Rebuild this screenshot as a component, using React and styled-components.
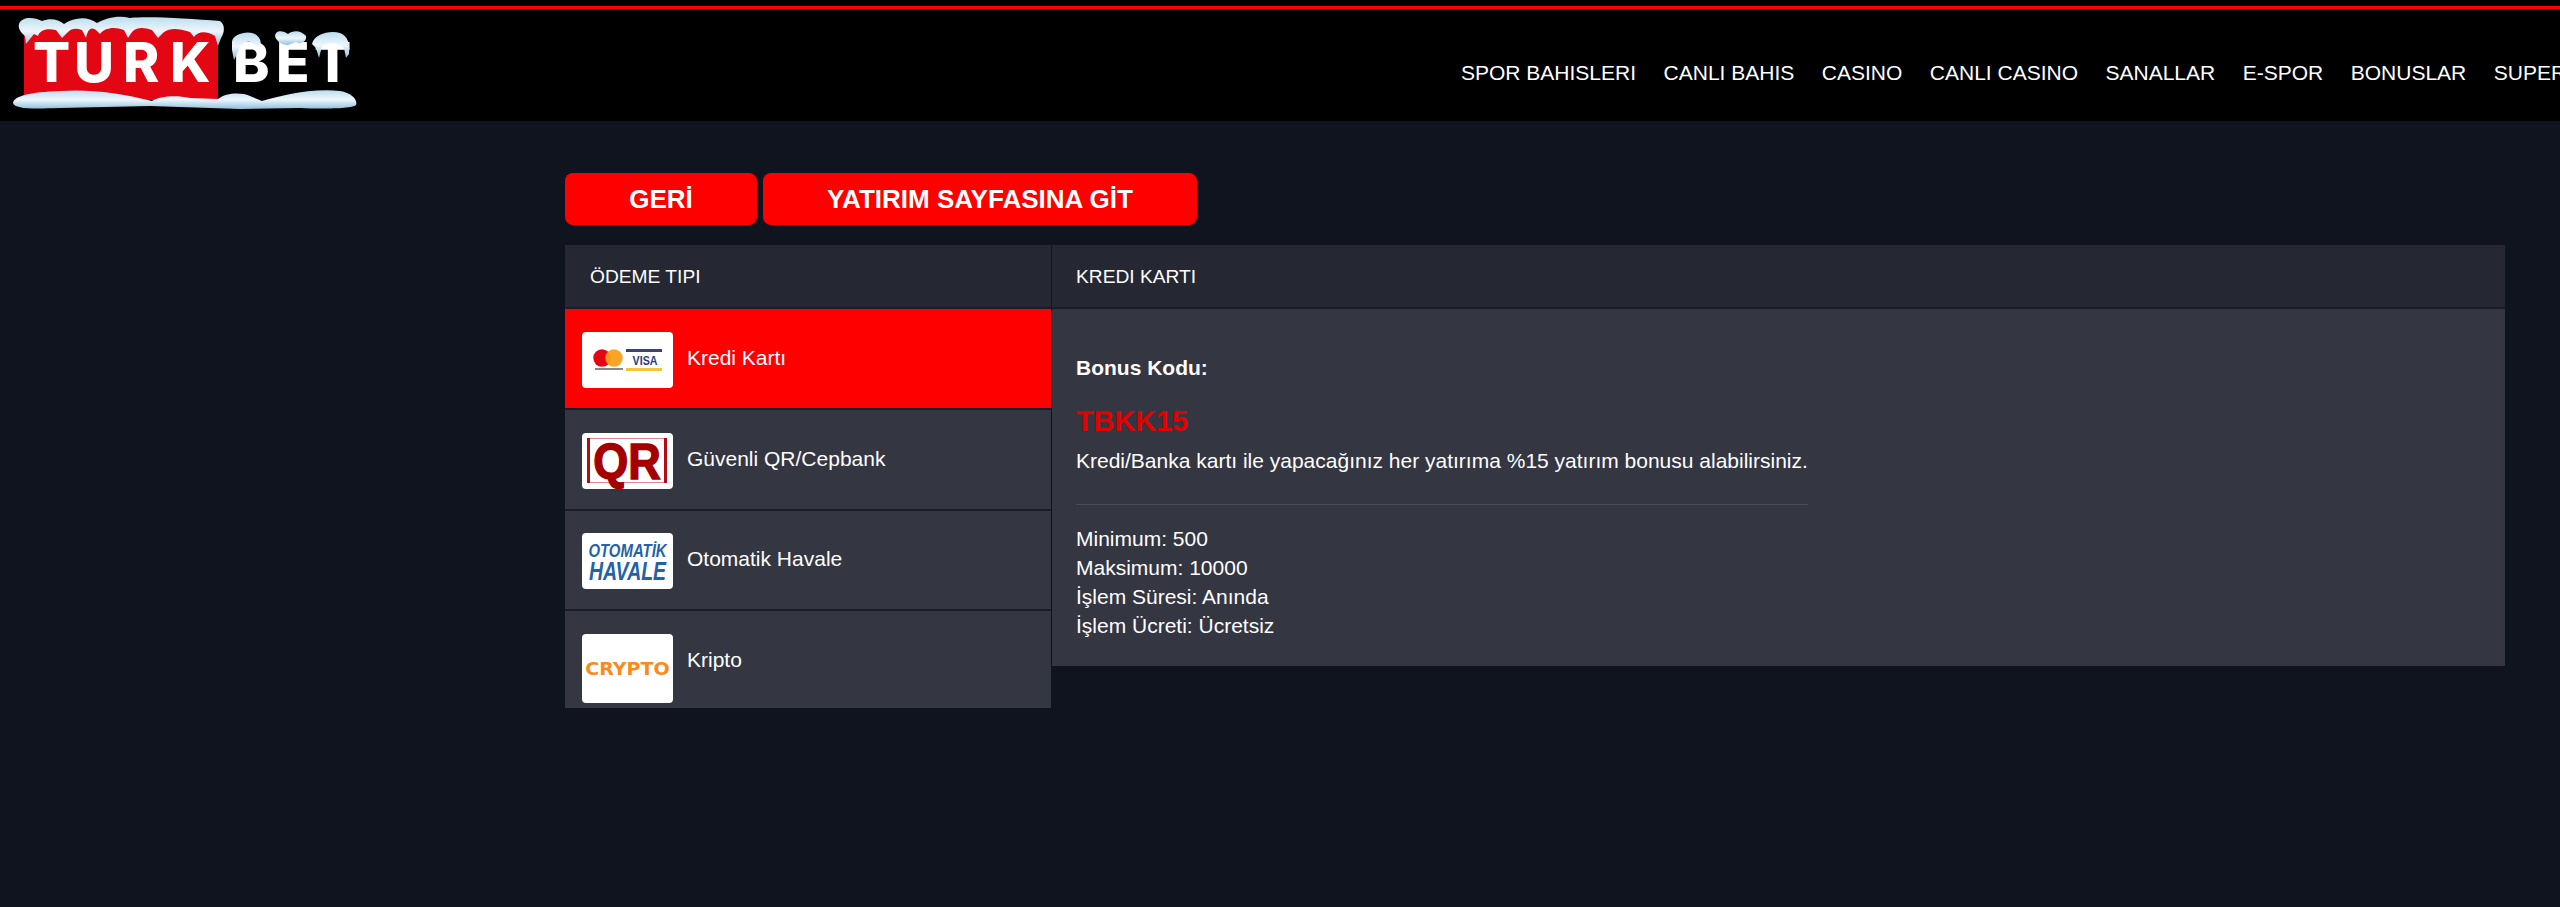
import React from "react";
import styled, { createGlobalStyle } from "styled-components";

const GlobalStyle = createGlobalStyle`
  html, body {
    margin: 0;
    height: 100%;
    background: #10141f;
    overflow: hidden;
  }
  body {
    font-family: "Liberation Sans", Arial, sans-serif;
    color: #fff;
  }
`;

const navItems = ["SPOR BAHISLERI", "CANLI BAHIS", "CASINO", "CANLI CASINO", "SANALLAR", "E-SPOR", "BONUSLAR", "SUPER TOTO"];

const details = ["Minimum: 500", "Maksimum: 10000", "İşlem Süresi: Anında", "İşlem Ücreti: Ücretsiz"];

const Snow = ({ d }) => <path d={d} fill="url(#snow)" />;

// drawn in page coordinates, the svg sits at the top left of the header
const Logo = () => (
  <LogoSvg viewBox="0 0 360 112" width="360" height="112">
    <defs>
      <linearGradient id="snow" x1="0" y1="0" x2="0" y2="1">
        <stop offset="0" stopColor="#bcdcee" />
        <stop offset="0.5" stopColor="#eef7fc" />
        <stop offset="1" stopColor="#8dbfdc" />
      </linearGradient>
    </defs>
    <rect x="24" y="28" width="194" height="72" fill="#e30613" />
    <g fontFamily="Inter, 'Liberation Sans', sans-serif" fontWeight="800" fontSize="55" fill="#fff">
      <text x="33 74 123 170" y="82">TURK</text>
      <text x="233 276 314" y="82">BET</text>
    </g>
    <Snow d="M19 24 C22 16 34 17 42 21 C50 18 58 19 64 24 C74 17 88 16 97 23 C106 18 118 15 130 18 C150 16 190 19 220 21 C226 25 224 34 221 38 L218 46 L215 36 C205 30 198 32 194 37 L190 32 C178 28 170 28 164 32 L158 38 L152 30 C144 27 136 27 132 32 L128 38 L124 30 C114 26 104 28 100 34 L96 30 C90 26 88 30 86 38 L82 30 C76 28 72 28 68 32 L62 38 L56 30 C46 28 40 30 38 36 L34 34 L26 44 L25 36 C20 32 18 28 19 24 Z" />
    <Snow d="M232 42 C232 35 245 31 252 33 C260 35 262 42 260 47 L250 42 C244 41 240 45 238 52 L234 60 L232 50 Z" />
    <Snow d="M275 36 C276 29 284 31 288 34 C293 30 301 30 306 36 C307 42 300 45 296 42 L288 45 C282 45 276 41 275 36 Z" />
    <Snow d="M312 44 C314 34 330 30 340 33 C348 36 350 44 349 54 L346 58 L344 48 C338 42 328 42 322 46 L319 58 L316 48 Z" />
    <Snow d="M13 103 C14 96 30 92 60 91 C90 89 120 93 152 101 C160 96 176 95 190 98 L218 99 C226 93 240 92 250 96 L262 101 C280 96 310 88 340 91 C352 93 358 100 356 105 C352 109 320 109 300 108 L240 109 L150 106 L60 108 C30 109 15 109 13 103 Z" />
  </LogoSvg>
);

const CardIcon = () => (
  <svg viewBox="0 0 91 56" width="91" height="56">
    <circle cx="20" cy="26" r="8.7" fill="#e30613" />
    <circle cx="32" cy="26" r="8.7" fill="#f9a01b" opacity="0.95" />
    <rect x="13" y="36" width="28" height="2" fill="#888" />
    <rect x="44" y="17" width="36" height="3" fill="#3c4281" />
    <text transform="translate(63 33) scale(0.82 1)" textAnchor="middle" fontFamily="Liberation Sans" fontWeight="700" fontSize="13" fill="#2b3a78">VISA</text>
    <rect x="44" y="36" width="36" height="3" fill="#f5c33c" />
  </svg>
);

const QrIcon = () => (
  <svg viewBox="0 0 91 56" width="91" height="56">
    <rect x="5" y="5" width="3" height="45" fill="#b10d12" />
    <rect x="82" y="5" width="3" height="45" fill="#b10d12" />
    <rect x="8" y="5" width="74" height="1" fill="#d88" />
    <rect x="8" y="49" width="74" height="1" fill="#d88" />
    <text transform="translate(45 46) scale(0.9 1)" textAnchor="middle" fontFamily="Liberation Sans" fontWeight="700" fontSize="50" fill="#a50000" stroke="#a50000" strokeWidth="1.5">QR</text>
  </svg>
);

const HavaleIcon = () => (
  <svg viewBox="0 0 91 56" width="91" height="56">
    <g fontFamily="Liberation Sans" fontWeight="700" fontStyle="italic" fill="#2462a8" textAnchor="middle">
      <text transform="translate(45.5 24) scale(0.83 1)" fontSize="18">OTOMATİK</text>
      <text transform="translate(45.5 47) scale(0.78 1)" fontSize="25">HAVALE</text>
    </g>
  </svg>
);

const CryptoIcon = () => (
  <svg viewBox="0 0 91 69" width="91" height="69">
    <text transform="translate(45.5 41) scale(1.06 1)" textAnchor="middle" fontFamily="DejaVu Sans" fontWeight="700" fontSize="18" fill="#fb8a1e">CRYPTO</text>
  </svg>
);

const methods = [
  { name: "Kredi Kartı", icon: <CardIcon />, active: true, height: 101 },
  { name: "Güvenli QR/Cepbank", icon: <QrIcon />, height: 100.5 },
  { name: "Otomatik Havale", icon: <HavaleIcon />, height: 100.5 },
  { name: "Kripto", icon: <CryptoIcon />, tall: true, height: 97 },
];

export default function App() {
  return (
    <>
      <GlobalStyle />
      <Header>
        <Logo />
        <Nav>
          {navItems.map((item) => (
            <NavLink key={item}>{item}</NavLink>
          ))}
        </Nav>
      </Header>
      <Main>
        <Buttons>
          <ActionButton $width={192}>GERİ</ActionButton>
          <ActionButton $width={434}>YATIRIM SAYFASINA GİT</ActionButton>
        </Buttons>
        <Columns>
          <LeftColumn>
            <ColumnTitle $pad={25}>ÖDEME TIPI</ColumnTitle>
            {methods.map((m) => (
              <MethodRow key={m.name} $active={m.active} $tall={m.tall} $height={m.height}>
                <IconBox $tall={m.tall}>{m.icon}</IconBox>
                <MethodName>{m.name}</MethodName>
              </MethodRow>
            ))}
          </LeftColumn>
          <RightColumn>
            <ColumnTitle $pad={24}>KREDI KARTI</ColumnTitle>
            <Details>
              <BonusBlock>
                <BonusLabel>Bonus Kodu:</BonusLabel>
                <BonusCode>TBKK15</BonusCode>
                <BonusText>Kredi/Banka kartı ile yapacağınız her yatırıma %15 yatırım bonusu alabilirsiniz.</BonusText>
                <Divider />
                {details.map((line) => (
                  <DetailLine key={line}>{line}</DetailLine>
                ))}
              </BonusBlock>
            </Details>
          </RightColumn>
        </Columns>
      </Main>
    </>
  );
}

const Header = styled.header`
  box-sizing: border-box;
  height: 121px;
  background: #000;
  display: flex;
  overflow: hidden;
  position: relative;

  &::before {
    content: "";
    position: absolute;
    top: 6px;
    left: 0;
    right: 0;
    height: 3px;
    background: #f00;
  }
`;

const LogoSvg = styled.svg`
  flex-shrink: 0;
`;

const Nav = styled.nav`
  display: flex;
  flex-shrink: 0;
  gap: 27.5px;
  margin-left: 1101px;
  padding-top: 61px;
`;

const NavLink = styled.a`
  font-size: 21px;
  line-height: 24px;
  white-space: nowrap;
  color: #fff;
`;

const Main = styled.main`
  box-sizing: border-box;
  width: 2505px;
  padding: 52px 0 0 565px;
`;

const Buttons = styled.div`
  display: flex;
  gap: 6px;
  margin-bottom: 20px;
`;

const ActionButton = styled.a`
  width: ${(p) => p.$width}px;
  height: 52px;
  border-radius: 8px;
  background: #f00;
  color: #fff;
  font-size: 26px;
  font-weight: 700;
  display: flex;
  align-items: center;
  justify-content: center;
`;

const Columns = styled.div`
  display: flex;
  align-items: flex-start;
  gap: 1px;
`;

const LeftColumn = styled.div`
  width: 486px;
  flex-shrink: 0;
`;

const RightColumn = styled.div`
  flex: 1;
`;

const ColumnTitle = styled.div`
  box-sizing: border-box;
  height: 64px;
  padding: 1px ${(p) => p.$pad}px 0;
  background: #252833;
  border-bottom: 2px solid #1a1d28;
  font-size: 19.2px;
  display: flex;
  align-items: center;
`;

const MethodRow = styled.div`
  box-sizing: border-box;
  height: ${(p) => p.$height}px;
  padding: 22.5px 0 0 17px;
  display: flex;
  gap: 14px;
  background: ${(p) => (p.$active ? "#f00" : "#343641")};
  border-bottom: ${(p) => (p.$tall ? "none" : "2px solid #1a1d28")};
`;

const IconBox = styled.div`
  width: 91px;
  height: ${(p) => (p.$tall ? "69px" : "56px")};
  background: #fff;
  border-radius: 4px;
  flex-shrink: 0;
  display: flex;
`;

const MethodName = styled.div`
  font-size: 21px;
  line-height: 52px;
`;

const Details = styled.div`
  background: #343641;
  padding: 44px 25px 26px 24px;
`;

const BonusBlock = styled.div`
  display: inline-block;
`;

const BonusLabel = styled.div`
  font-size: 21px;
  line-height: 29px;
  font-weight: 700;
`;

const BonusCode = styled.div`
  margin-top: 19px;
  font-size: 28.8px;
  line-height: 40px;
  font-weight: 700;
  color: #e30000;
`;

const BonusText = styled.div`
  margin-top: 5px;
  font-size: 21px;
  line-height: 29px;
`;

const Divider = styled.div`
  height: 1px;
  margin: 28.5px 0 19.5px;
  background: #4a4c57;
`;

const DetailLine = styled.div`
  font-size: 21px;
  line-height: 29px;
`;
